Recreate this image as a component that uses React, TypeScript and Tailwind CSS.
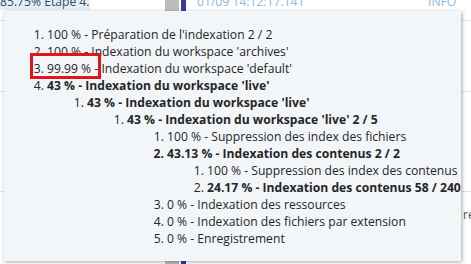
import React from "react";

type Item = { pct: string; label: string; bold?: boolean; markerBold?: boolean; children?: Item[] };

const items: Item[] = [
  { pct: "100 %", label: "Préparation de l'indexation 2 / 2" },
  { pct: "100 %", label: "Indexation du workspace 'archives'" },
  { pct: "99.99 %", label: "Indexation du workspace 'default'" },
  {
    pct: "43 %",
    label: "Indexation du workspace 'live'",
    bold: true,
    children: [
      {
        pct: "43 %",
        label: "Indexation du workspace 'live'",
        bold: true,
        children: [
          {
            pct: "43 %",
            label: "Indexation du workspace 'live' 2 / 5",
            bold: true,
            children: [
              { pct: "100 %", label: "Suppression des index des fichiers" },
              {
                pct: "43.13 %",
                label: "Indexation des contenus 2 / 2",
                bold: true,
                markerBold: true,
                children: [
                  { pct: "100 %", label: "Suppression des index des contenus" },
                  { pct: "24.17 %", label: "Indexation des contenus 58 / 240", bold: true },
                ],
              },
              { pct: "0 %", label: "Indexation des ressources" },
              { pct: "0 %", label: "Indexation des fichiers par extension" },
              { pct: "0 %", label: "Enregistrement" },
            ],
          },
        ],
      },
    ],
  },
];

function List({ data }: { data: Item[] }) {
  return (
    <ol className="list-decimal pl-[40px]">
      {data.map((it, i) => (
        <li key={i} className={it.markerBold ? "font-bold" : "font-normal"}>
          <span className={it.bold ? "font-bold" : "font-normal"}>
            {it.pct} - {it.label}
          </span>
          {it.children && <List data={it.children} />}
        </li>
      ))}
    </ol>
  );
}

export default function App() {
  return (
    <div className="relative w-[471px] h-[264px] overflow-hidden bg-white font-['Open_Sans',sans-serif] text-[12.15px]">
      {/* background log table */}
      <div className="flex flex-col -mt-[7px] whitespace-nowrap">
        <div className="flex h-[28px] border-b border-[#e4e4e4] leading-[17px]">
          <div className="w-[165px] shrink-0">
            <span className="bg-[#e2f0fb] text-[#3e4a57] inline-block h-[17px]">85.75% Etape 4.</span>
          </div>
          <div className="w-[14px] shrink-0 bg-[#bdbdbd]" />
          <div className="w-[2px] shrink-0" />
          <div className="w-[5px] shrink-0 bg-[#3d3a97]" />
          <div className="w-[11px] shrink-0" />
          <div className="w-[231px] shrink-0 text-[#8ab8ea]">01/09 14:12:17.141</div>
          <div className="text-[#8ab8ea]">INFO</div>
        </div>
        <div className="h-[71px] border-b border-[#e4e4e4]" />
        <div className="h-[100px] border-b border-[#e4e4e4]" />
        <div className="flex h-[80px]">
          <div className="w-[165px] shrink-0" />
          <div className="w-[14px] shrink-0 bg-[#bdbdbd]" />
          <div className="w-[2px] shrink-0" />
          <div className="w-[5px] shrink-0 bg-[#3d3a97]" />
          <div className="w-[277px] shrink-0" />
          <div className="pt-[14px] leading-[17px] text-[#555]">re</div>
        </div>
      </div>

      {/* tooltip */}
      <div className="absolute left-[4px] top-[11px] w-[457px] h-[250px] bg-[#f3f6f9] shadow-[1px_1px_4px_rgba(0,0,0,0.35)] pt-[15px] pl-[3px] text-[#262626] leading-[17px] whitespace-nowrap">
        <List data={items} />
      </div>

      {/* highlight box */}
      <div className="absolute left-[30px] top-[53px] w-[71px] h-[26px] border-[3px] border-[#e3151a]" />
    </div>
  );
}
